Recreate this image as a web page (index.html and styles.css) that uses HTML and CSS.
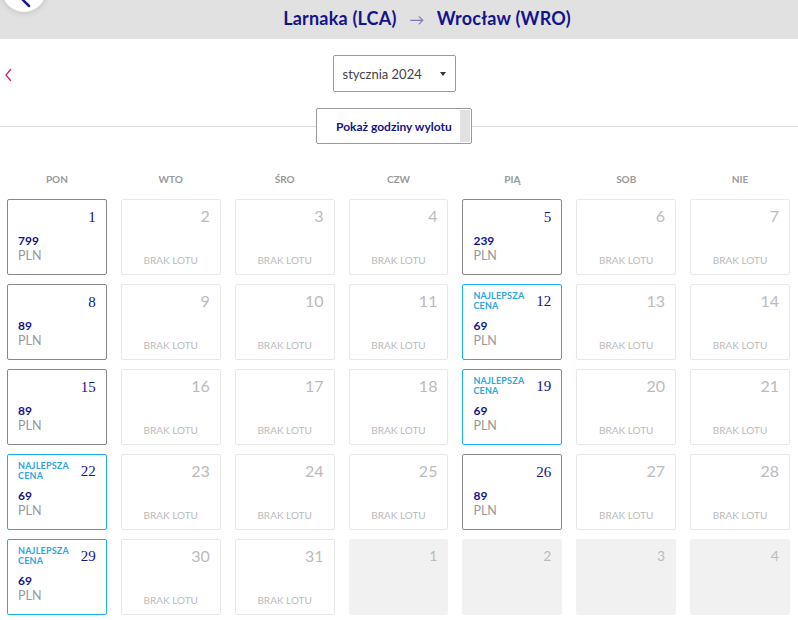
FILE: index.html
```html
<!DOCTYPE html>
<html lang="pl">
<head>
    <meta charset="UTF-8">
    <title>Larnaka (LCA) → Wrocław (WRO)</title>
    <link rel="stylesheet" href="styles.css">
</head>
<body>

<header class="topbar">
    <button class="back-btn" type="button">
        <svg width="16" height="16" viewBox="0 0 16 16"><path d="M10 2 L4 8 L10 14" fill="none" stroke="#1a1a8e" stroke-width="2.5" stroke-linecap="round"/></svg>
    </button>
    <h1>Larnaka (LCA) <span class="arrow">→</span> Wrocław (WRO)</h1>
</header>

<div class="month-nav">
    <span class="prev">
        <svg width="10" height="14" viewBox="0 0 10 14"><path d="M7 1 L2 7 L7 13" fill="none" stroke="#c8287a" stroke-width="1.3"/></svg>
    </span>
    <div class="month-select">
        <span>stycznia 2024</span>
        <span class="caret"></span>
    </div>
</div>

<div class="toggle-row">
    <button class="toggle" type="button">Pokaż godziny wylotu<span class="thumb"></span></button>
</div>

<div class="weekdays">
    <div>PON</div><div>WTO</div><div>ŚRO</div><div>CZW</div><div>PIĄ</div><div>SOB</div><div>NIE</div>
</div>

<div class="calendar" id="calendar"></div>

<script>
    // ceny na styczeń; brak wpisu = brak lotu
    const prices = {1: 799, 5: 239, 8: 89, 12: 69, 15: 89, 19: 69, 22: 69, 26: 89, 29: 69};
    const best = [12, 19, 22, 29];
    const cal = document.getElementById("calendar");
    let html = "";

    for (let d = 1; d <= 31; d++) {
        if (prices[d]) {
            const isBest = best.includes(d);
            html += '<div class="day active' + (isBest ? ' best' : '') + '">' +
                '<div class="top">' +
                (isBest ? '<span class="badge">NAJLEPSZA<br>CENA</span>' : '<span></span>') +
                '<span class="num">' + d + '</span></div>' +
                '<div class="price"><b>' + prices[d] + '</b><span>PLN</span></div></div>';
        } else {
            html += '<div class="day empty"><div class="top"><span></span><span class="num">' + d + '</span></div>' +
                '<div class="none">BRAK LOTU</div></div>';
        }
    }
    // początek lutego
    for (let d = 1; d <= 4; d++) {
        html += '<div class="day next"><div class="top"><span></span><span class="num">' + d + '</span></div></div>';
    }
    cal.innerHTML = html;
</script>

</body>
</html>
```

FILE: styles.css
```css
body {
    font-family: 'Lato', 'Liberation Sans', sans-serif;
    background-color: #fff;
    margin: 0;
    padding: 0;
    color: #333;
    overflow: hidden;
}
.topbar {
    position: relative;
    height: 39px;
    background-color: #e1e1e1;
    display: flex;
    justify-content: center;
    align-items: center;
}
.topbar h1 {
    margin: 0 0 4px 56px;
    font-size: 18px;
    font-weight: 700;
    color: #14148a;
    letter-spacing: 0.2px;
}
.topbar .arrow {
    font-weight: 400;
    color: #7a7ab8;
    font-size: 15px;
    margin: 0 8px;
}
.back-btn {
    position: absolute;
    left: 2px;
    top: -32px;
    width: 44px;
    height: 44px;
    border-radius: 50%;
    border: none;
    background: #fff;
    box-shadow: 0 1px 6px rgba(0, 0, 0, 0.15);
    display: flex;
    align-items: flex-end;
    justify-content: center;
    padding: 0 0 4px 6px;
}
.month-nav {
    position: relative;
    display: flex;
    justify-content: center;
    padding: 16px 10px 0 0;
}
.prev {
    position: absolute;
    left: 4px;
    top: 27px;
}
.month-select {
    display: flex;
    align-items: center;
    justify-content: space-between;
    padding: 0 9px;
    box-sizing: border-box;
    width: 123px;
    height: 37px;
    border: 1px solid #999;
    border-radius: 2px;
    font-size: 13px;
    color: #444;
}
.caret {
    width: 0;
    height: 0;
    border-left: 3px solid transparent;
    border-right: 3px solid transparent;
    border-top: 4px solid #333;
}
.toggle-row {
    position: relative;
    display: flex;
    justify-content: center;
    padding: 16px 10px 0 0;
}
.toggle-row::before {
    content: "";
    position: absolute;
    left: 0;
    right: 0;
    top: 34px;
    border-top: 1px solid #ddd;
}
.toggle {
    position: relative;
    width: 156px;
    height: 36px;
    border: 1px solid #999;
    border-radius: 2px;
    background: #fff;
    font-family: inherit;
    font-size: 12px;
    font-weight: 700;
    color: #14148a;
    text-align: left;
    padding: 0 0 0 19px;
}
.toggle .thumb {
    position: absolute;
    right: 1px;
    top: 1px;
    width: 10px;
    height: 32px;
    background: #e1e1e1;
}
.weekdays {
    display: grid;
    grid-template-columns: repeat(7, 1fr);
    column-gap: 14px;
    padding: 29px 8px 0 7px;
    font-size: 10px;
    font-weight: 700;
    color: #999;
    text-align: center;
}
.calendar {
    display: grid;
    grid-template-columns: repeat(7, 1fr);
    grid-auto-rows: 76px;
    gap: 9px 14px;
    padding: 14px 8px 0 7px;
}
.day {
    border: 1px solid #e8e8e8;
    border-radius: 2px;
    box-sizing: border-box;
    padding: 7px 10px 11px 10px;
    display: flex;
    flex-direction: column;
}
.day .top {
    display: flex;
    justify-content: space-between;
    align-items: flex-start;
}
.day .num {
    font-size: 16px;
    color: #bbb;
    line-height: 18px;
}
.day.active {
    border-color: #888;
}
.day.active .num {
    font-family: 'Liberation Serif', serif;
    color: #14148a;
    font-size: 15px;
    margin-top: 1px;
}
.day.best {
    border-color: #1ab2e8;
    padding-top: 6px;
}
.badge {
    font-size: 9px;
    font-weight: 700;
    line-height: 10px;
    color: #2aa6e0;
    letter-spacing: 0.2px;
}
.price {
    margin-top: auto;
    display: flex;
    flex-direction: column;
}
.price b {
    font-size: 12px;
    line-height: 15px;
    color: #14148a;
}
.price span {
    font-size: 12.5px;
    line-height: 15px;
    color: #999;
}
.none {
    margin-top: auto;
    text-align: center;
    font-size: 10px;
    color: #bbb;
    margin-bottom: -3px;
}
.day.next {
    background: #f1f1f1;
    border-color: #f1f1f1;
}
.day.next .num {
    font-size: 14px;
    color: #bbb;
}
```
